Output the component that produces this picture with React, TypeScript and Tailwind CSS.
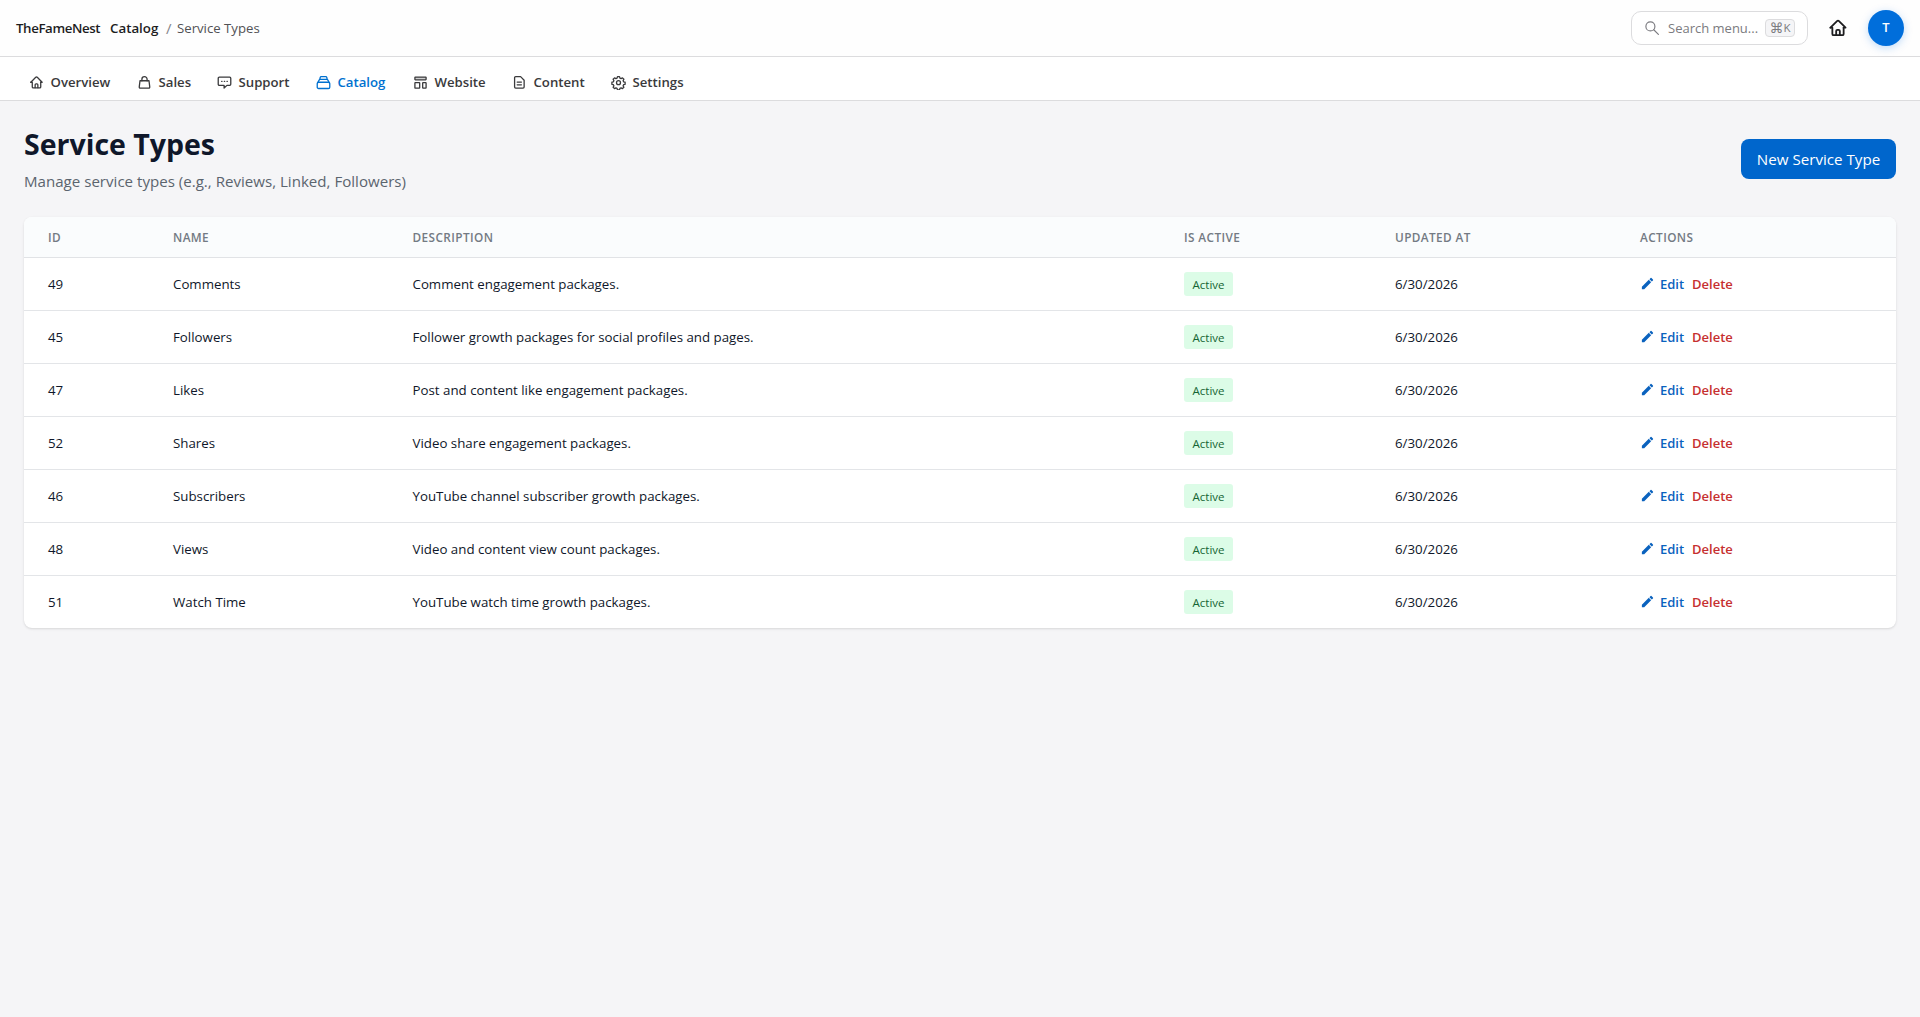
import type { ReactNode } from 'react';

const iconPaths: Record<string, ReactNode> = {
  home: (
    <>
      <path d="M1.7 9.6 8.9 2.4a1.6 1.6 0 0 1 2.2 0l7.2 7.2h-2.1" />
      <path d="M1.7 9.6h2.1v6.9c0 .8.6 1.4 1.4 1.4h9.6c.8 0 1.4-.6 1.4-1.4V9.6" />
      <path d="M8 17.6v-4.2c0-.8.6-1.4 1.4-1.4h1.2c.8 0 1.4.6 1.4 1.4v4.2" />
    </>
  ),
  bag: (
    <>
      <path d="M3.4 7.4h13.2l1.1 9a1.5 1.5 0 0 1-1.5 1.8H3.8a1.5 1.5 0 0 1-1.5-1.8z" />
      <path d="M6.2 7.4V5.2a3.8 3.8 0 0 1 7.6 0v2.2" />
    </>
  ),
  chat: (
    <>
      <path d="M2.4 2.2h15.2c.9 0 1.6.7 1.6 1.6v8.8c0 .9-.7 1.6-1.6 1.6h-4L9.4 18.2v-4h-7c-.9 0-1.6-.7-1.6-1.6V3.8c0-.9.7-1.6 1.6-1.6z" />
      <path d="M5.8 8.2h.6M9.7 8.2h.6M13.6 8.2h.6" />
    </>
  ),
  collection: (
    <>
      <path d="M4.6 5.4 5.2 2.6c.2-.8.7-1.2 1.4-1.2h6.8c.7 0 1.2.4 1.4 1.2l.6 2.8" />
      <path d="M1.4 10.4 3.8 6.2c.3-.5.7-.8 1.2-.8h10c.5 0 .9.3 1.2.8l2.4 4.2" />
      <rect x="0.8" y="9.6" width="18.4" height="9.2" rx="2" />
    </>
  ),
  layout: (
    <>
      <rect x="1.8" y="2" width="16.4" height="4" rx="0.6" fill="currentColor" fillOpacity="0.25" />
      <rect x="1.8" y="10.2" width="7" height="8" rx="0.6" />
      <rect x="13.2" y="10.2" width="5" height="8" rx="0.6" />
    </>
  ),
  page: (
    <>
      <path d="M4.4 1.4h7.2l5.2 5.2v10c0 .9-.7 1.6-1.6 1.6H4.4c-.9 0-1.6-.7-1.6-1.6V3c0-.9.7-1.6 1.6-1.6z" />
      <path d="M6.6 9.4h6.2M6.6 13.4h6.2" />
    </>
  ),
  gear: (
    <>
      <path d="M8.5 1.4h3l.6 2.2 1.7.7 2-1.1 2.1 2.1-1.1 2 .7 1.7 2.2.6v3l-2.2.6-.7 1.7 1.1 2-2.1 2.1-2-1.1-1.7.7-.6 2.2h-3l-.6-2.2-1.7-.7-2 1.1-2.1-2.1 1.1-2-.7-1.7-2.2-.6v-3l2.2-.6.7-1.7-1.1-2 2.1-2.1 2 1.1 1.7-.7z" />
      <circle cx="10" cy="10.2" r="2.9" />
    </>
  ),
  search: (
    <>
      <circle cx="7.8" cy="7.8" r="6.2" />
      <path d="m12.4 12.4 6.4 6.4" />
    </>
  ),
};

function Icon({ name, className }: { name: string; className?: string }) {
  return (
    <svg
      viewBox="-1 -1 22 22"
      fill="none"
      stroke="currentColor"
      strokeLinecap="round"
      strokeLinejoin="round"
      className={className}
    >
      {iconPaths[name]}
    </svg>
  );
}

const navItems = [
  { label: 'Overview', icon: 'home', width: 'w-[108px]' },
  { label: 'Sales', icon: 'bag', width: 'w-20' },
  { label: 'Support', icon: 'chat', width: 'w-[99px]' },
  { label: 'Catalog', icon: 'collection', width: 'w-[97px]', active: true },
  { label: 'Website', icon: 'layout', width: 'w-[99px]' },
  { label: 'Content', icon: 'page', width: 'w-[99px]' },
  { label: 'Settings', icon: 'gear', width: 'w-[100px]' },
];

const serviceTypes = [
  { id: 49, name: 'Comments', description: 'Comment engagement packages.' },
  { id: 45, name: 'Followers', description: 'Follower growth packages for social profiles and pages.' },
  { id: 47, name: 'Likes', description: 'Post and content like engagement packages.' },
  { id: 52, name: 'Shares', description: 'Video share engagement packages.' },
  { id: 46, name: 'Subscribers', description: 'YouTube channel subscriber growth packages.' },
  { id: 48, name: 'Views', description: 'Video and content view count packages.' },
  { id: 51, name: 'Watch Time', description: 'YouTube watch time growth packages.' },
];

const columns = [
  { label: 'ID', width: 'w-[125px]' },
  { label: 'Name', width: 'w-[239.5px]' },
  { label: 'Description', width: 'w-[771.5px]' },
  { label: 'Is Active', width: 'w-[211px]' },
  { label: 'Updated At', width: 'w-[245px]' },
  { label: 'Actions', width: 'w-[280px]' },
];

function TopBar() {
  return (
    <header className="flex h-[57px] items-center justify-between border-b border-[#dcdcde] bg-[#fefefe] px-4">
      <div className="flex items-center pt-px text-[13.3px] text-[#1d1d1f]">
        <span className="w-[94px] font-semibold tracking-[-0.4px]">TheFameNest</span>
        <span className="w-[56px] font-semibold">Catalog</span>
        <span className="w-[11px] text-[15px] text-[#86868b]">/</span>
        <span className="text-[13.2px] text-[#515154]">Service Types</span>
      </div>
      <div className="flex items-center">
        <div className="flex h-[34px] w-[177px] items-center rounded-[10px] border border-[#dcdcde] bg-white pl-3 text-[13px] text-[#7b7b80]">
          <Icon name="search" className="size-4 stroke-[1.6]" />
          <span className="ml-2 w-[97px] pt-px whitespace-nowrap">Search menu...</span>
          <kbd className="flex h-[18px] w-[30px] items-center justify-center rounded border border-[#dcdcde] bg-[#f5f5f7] font-['DejaVu_Sans','Open_Sans',sans-serif] text-[14px] leading-none">
            ⌘<span className="font-['Open_Sans',sans-serif] text-[11.5px]">K</span>
          </kbd>
        </div>
        <Icon name="home" className="ml-5 size-5 stroke-2 text-[#1d1d1f]" />
        <div className="ml-5 flex size-9 items-center justify-center rounded-full bg-[#006edb] text-[13px] font-semibold text-white shadow-[0_2px_8px_rgba(0,113,227,0.25)]">
          T
        </div>
      </div>
    </header>
  );
}

function NavBar() {
  return (
    <nav className="flex h-11 items-center border-b border-[#dcdcde] bg-white pt-2 pl-7">
      {navItems.map((item) => (
        <a
          key={item.label}
          className={`flex shrink-0 items-center gap-[6.5px] text-[13.2px] font-semibold ${item.width} ${
            item.active ? 'text-[#0071d0]' : 'text-[#3a3a3c]'
          }`}
        >
          <Icon name={item.icon} className="mr-[0.5px] ml-[0.5px] size-[15px] shrink-0 stroke-[1.9]" />
          {item.label}
        </a>
      ))}
    </nav>
  );
}

export default function App() {
  return (
    <div className="min-h-screen bg-[#f5f5f7] font-['Open_Sans','Noto_Sans',sans-serif]">
      <TopBar />
      <NavBar />
      <main className="px-6 pt-[23px]">
        <div className="flex h-[93px] items-start justify-between">
          <div>
            <h1 className="text-[28.5px] leading-10 font-bold text-[#0f172a]">Service Types</h1>
            <p className="mt-[5px] text-[15.1px] leading-6 text-[#5b646e]">
              Manage service types (e.g., Reviews, Linked, Followers)
            </p>
          </div>
          <button className="mt-[15px] h-10 w-[155px] rounded-lg bg-[#0066cc] text-[15.15px] text-white">
            New Service Type
          </button>
        </div>
        <div className="overflow-hidden rounded-lg bg-white shadow-sm">
          <table className="w-full table-fixed border-separate border-spacing-0 text-left">
            <thead className="bg-[#fafcfd]">
              <tr>
                {columns.map((column) => (
                  <th
                    key={column.label}
                    className={`h-[41px] border-b border-[#e1e3e6] px-6 pt-[2px] pb-0 text-[11.8px] font-semibold tracking-[0.4px] text-[#737a83] uppercase ${column.width}`}
                  >
                    {column.label}
                  </th>
                ))}
              </tr>
            </thead>
            <tbody className="text-[13.3px] text-[#0f172a] [&>tr:last-child>td]:h-[52px] [&>tr:last-child>td]:border-b-0 [&_td]:h-[53px] [&_td]:border-b [&_td]:border-[#e3e5e8] [&_td]:px-6 [&_td]:pt-[2px] [&_td]:pb-0">
              {serviceTypes.map((type) => (
                <tr key={type.id}>
                  <td>{type.id}</td>
                  <td>{type.name}</td>
                  <td>{type.description}</td>
                  <td>
                    <span className="-mt-[2px] flex h-6 w-[49px] items-center justify-center rounded-[3px] bg-[#dcfce7] pt-[2px] text-[11.5px] text-[#166534]">
                      Active
                    </span>
                  </td>
                  <td>6/30/2026</td>
                  <td>
                    <div className="flex items-center text-[13px] font-semibold">
                      <svg viewBox="0 0 24 24" fill="currentColor" className="-mt-[3px] mr-px size-[15px] text-[#0a62be]">
                        <path d="M3 17.25V21h3.75L17.81 9.94l-3.75-3.75L3 17.25zM20.71 7.04a1 1 0 0 0 0-1.41l-2.34-2.34a1 1 0 0 0-1.41 0l-1.83 1.83 3.75 3.75 1.83-1.83z" />
                      </svg>
                      <span className="ml-1 w-8 text-[#0a62be]">Edit</span>
                      <span className="text-[#c62f2f]">Delete</span>
                    </div>
                  </td>
                </tr>
              ))}
            </tbody>
          </table>
        </div>
      </main>
    </div>
  );
}
